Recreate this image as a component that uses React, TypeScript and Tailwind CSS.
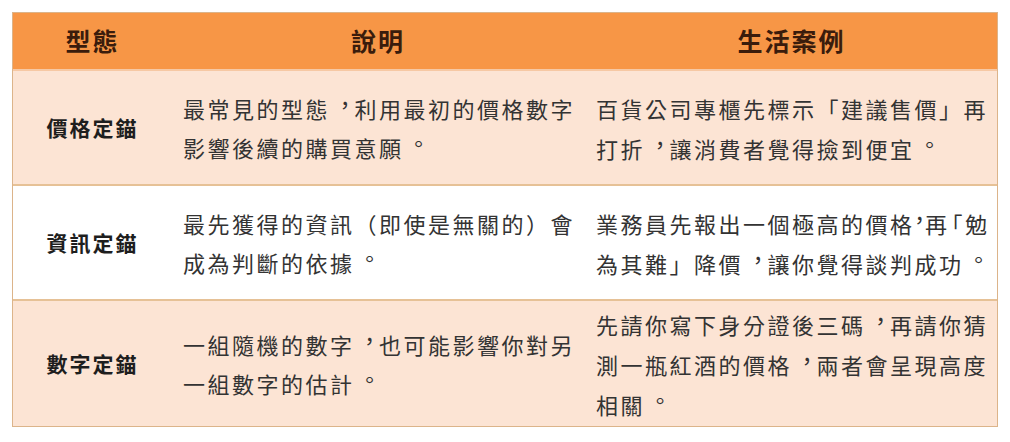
import React from 'react'

// center the full-width comma / period like the Traditional Chinese forms
function T({ s }: { s: string }) {
    return (
        <>
            {s.split(/([，。])/).map((part, i) =>
                part === '，' || part === '。' ? (
                    <span key={i} className="inline-block translate-x-[4px] -translate-y-[5px]">
                        {part}
                    </span>
                ) : (
                    <React.Fragment key={i}>{part}</React.Fragment>
                )
            )}
        </>
    )
}

const rows = [
    {
        type: '價格定錨',
        bg: 'bg-[#fce4d4]',
        desc: ['最常見的型態，利用最初的價格數字', '影響後續的購買意願。'],
        example: [<T s="百貨公司專櫃先標示「建議售價」再" />, <T s="打折，讓消費者覺得撿到便宜。" />],
        h: 'h-[115px]',
    },
    {
        type: '資訊定錨',
        bg: 'bg-white',
        desc: ['最先獲得的資訊（即使是無關的）會', '成為判斷的依據。'],
        example: [
            <>
                業務員先報出一個極高的價格
                <span className="inline-block -mx-[7px] translate-x-[1px] -translate-y-[5px]">，</span>再
                <span className="-ml-[9px]">「</span>勉
            </>,
            <T s="為其難」降價，讓你覺得談判成功。" />,
        ],
        h: 'h-[115px]',
    },
    {
        type: '數字定錨',
        bg: 'bg-[#fce4d4]',
        desc: ['一組隨機的數字，也可能影響你對另', '一組數字的估計。'],
        example: [
            <T s="先請你寫下身分證後三碼，再請你猜" />,
            <T s="測一瓶紅酒的價格，兩者會呈現高度" />,
            <T s="相關。" />,
        ],
        h: 'h-[125px]',
    },
]

export default function App() {
    return (
        <div
            lang="zh-TW"
            className="w-[1010px] h-[442px] bg-white pt-[12px] pl-[12px] font-['Noto_Sans_CJK_TC','Noto_Sans',sans-serif]"
        >
            <div className="w-[986px] border border-[#dcb48a]">
                <div className="grid grid-cols-[157px_416px_1fr] h-[58px] bg-[#f79646] text-[25px] font-bold tracking-[2px] text-[#3a1c0c] border-b-2 border-[#f6c8a4]">
                    <div className="flex items-center justify-center pl-[2px]">型態</div>
                    <div className="flex items-center justify-center">說明</div>
                    <div className="flex items-center justify-center">生活案例</div>
                </div>
                {rows.map((r, i) => (
                    <div
                        key={r.type}
                        className={`grid grid-cols-[157px_416px_1fr] ${r.h} ${r.bg} ${i < rows.length - 1 ? 'border-b-2 border-[#e6c196]' : ''}`}
                    >
                        <div className="flex items-center justify-center text-[21px] font-bold tracking-[2px] text-[#1e1e1e] pl-[2px]">
                            {r.type}
                        </div>
                        <div className="flex flex-col justify-center pl-[13px] text-[22px] leading-[39px] tracking-[2.5px] text-[#333] whitespace-nowrap">
                            {r.desc.map((l) => (
                                <div key={l}>
                                    <T s={l} />
                                </div>
                            ))}
                        </div>
                        <div className="flex flex-col justify-center pl-[10px] text-[22px] leading-[40px] tracking-[2.5px] text-[#333] whitespace-nowrap">
                            {r.example.map((l, j) => (
                                <div key={j}>{l}</div>
                            ))}
                        </div>
                    </div>
                ))}
            </div>
        </div>
    )
}
